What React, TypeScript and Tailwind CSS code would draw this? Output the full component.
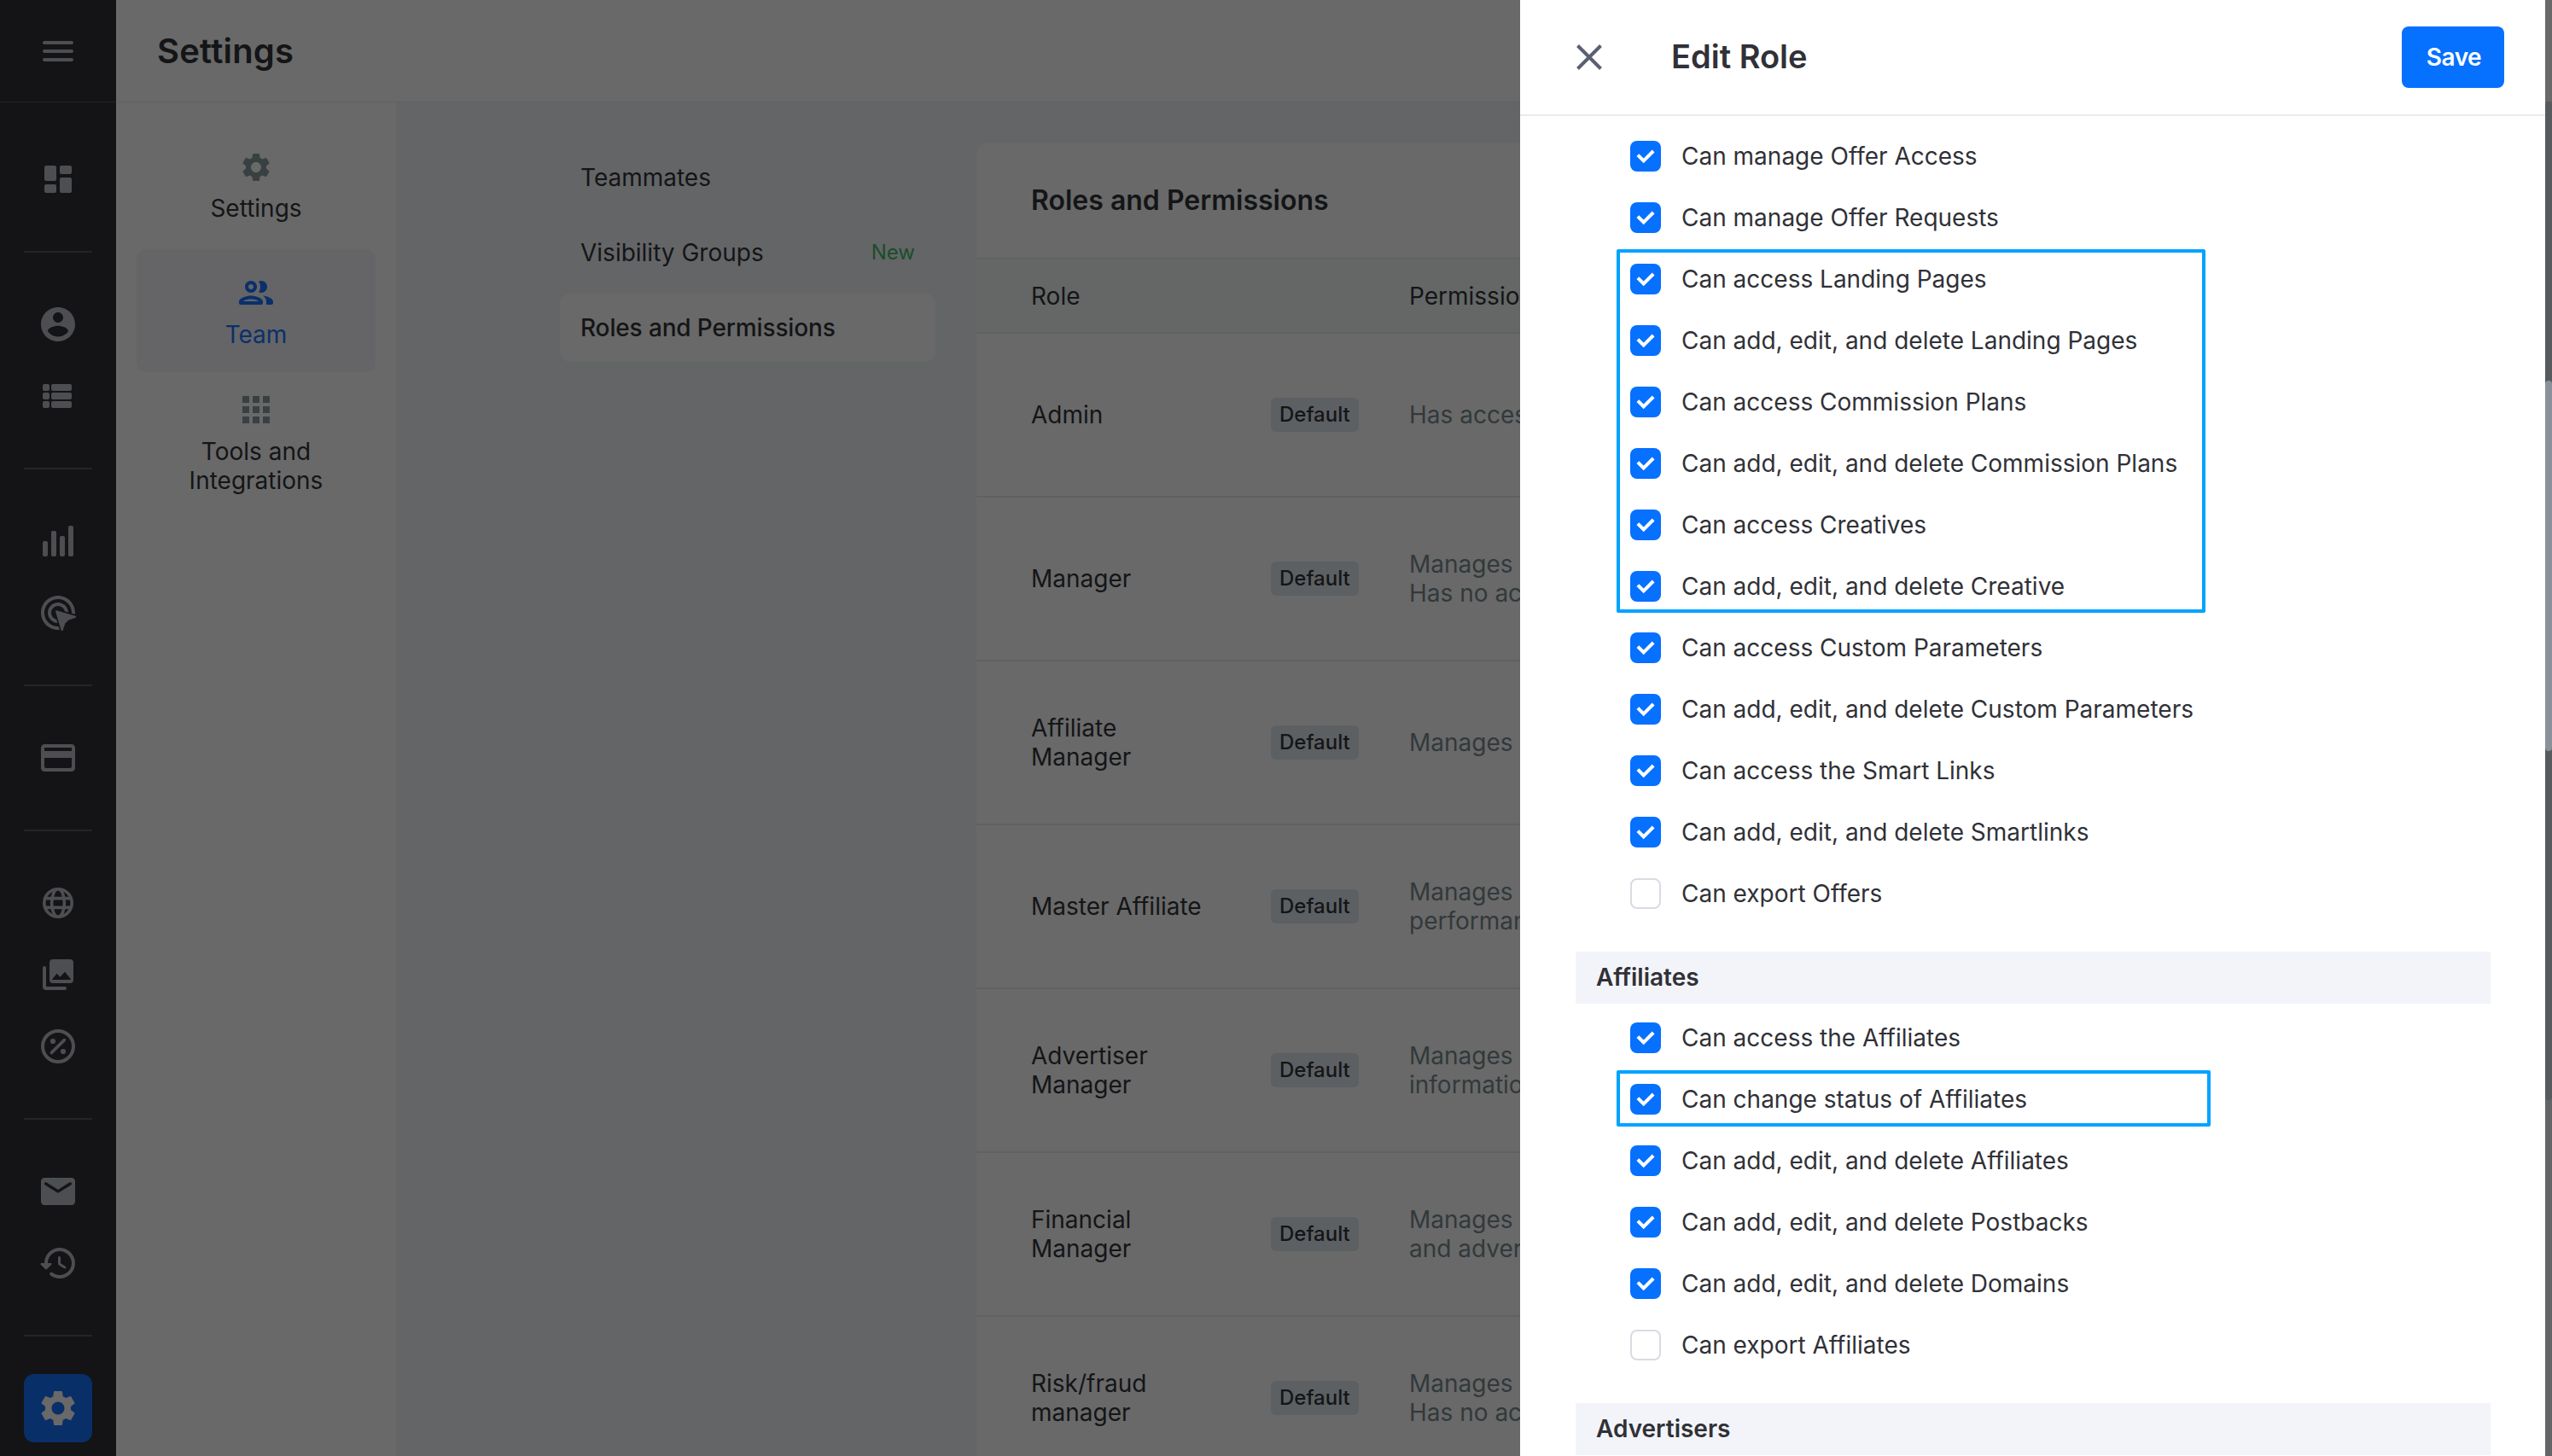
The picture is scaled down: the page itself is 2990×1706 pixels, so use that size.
import clsx from 'clsx';
import { type ReactNode } from 'react';
import { MdSettings } from 'react-icons/md';

const navGroups: { name: string; icon: ReactNode }[][] = [
  [
    {
      name: 'Dashboard',
      icon: (
        <>
          <rect x="4" y="4" width="7" height="9" rx="1" />
          <rect x="4" y="15" width="7" height="5" rx="1" />
          <rect x="13" y="4" width="7" height="5" rx="1" />
          <rect x="13" y="11" width="7" height="9" rx="1" />
        </>
      ),
    },
  ],
  [
    {
      name: 'Account',
      icon: (
        <path d="M12 2C6.48 2 2 6.48 2 12s4.48 10 10 10 10-4.48 10-10S17.52 2 12 2zm0 3c1.66 0 3 1.34 3 3s-1.34 3-3 3-3-1.34-3-3 1.34-3 3-3zm0 14.2c-2.5 0-4.71-1.28-6-3.22.03-1.99 4-3.08 6-3.08 1.99 0 5.97 1.09 6 3.08-1.29 1.94-3.5 3.22-6 3.22z" />
      ),
    },
    {
      name: 'List',
      icon: (
        <>
          <rect x="3" y="5" width="4" height="4" rx="1" />
          <rect x="8" y="5" width="12" height="4" rx="1" />
          <rect x="3" y="10" width="4" height="4" rx="1" />
          <rect x="8" y="10" width="12" height="4" rx="1" />
          <rect x="3" y="15" width="4" height="4" rx="1" />
          <rect x="8" y="15" width="12" height="4" rx="1" />
        </>
      ),
    },
  ],
  [
    {
      name: 'Reports',
      icon: (
        <>
          <rect x="3" y="12" width="3" height="9" rx="1" />
          <rect x="8" y="6" width="3" height="15" rx="1" />
          <rect x="13" y="9" width="3" height="12" rx="1" />
          <rect x="18" y="3" width="3" height="18" rx="1" />
        </>
      ),
    },
    {
      name: 'Clicks',
      icon: (
        <path d="M11.71 17.99A5.993 5.993 0 0 1 6 12c0-3.31 2.69-6 6-6 3.22 0 5.84 2.53 5.99 5.71l-2.1-.63a3.999 3.999 0 1 0-4.81 4.81l.63 2.1zM22 12c0 .3-.01.6-.04.9l-1.97-.59c.01-.1.01-.21.01-.31 0-4.42-3.58-8-8-8s-8 3.58-8 8 3.58 8 8 8c.1 0 .21 0 .31-.01l.59 1.97c-.3.03-.6.04-.9.04-5.52 0-10-4.48-10-10S6.48 2 12 2s10 4.48 10 10zm-3.77 4.26 3.98-1.33c.5-.17.49-.88-.01-1.03l-11.01-3.3c-.41-.12-.8.26-.67.67l3.3 11.01c.15.51.86.52 1.03.01l1.33-3.98" />
      ),
    },
  ],
  [
    {
      name: 'Billing',
      icon: (
        <path d="M20 4H4c-1.11 0-1.99.89-1.99 2L2 18c0 1.11.89 2 2 2h16c1.11 0 2-.89 2-2V6c0-1.11-.89-2-2-2zm-1 14H5c-.55 0-1-.45-1-1v-5h16v5c0 .55-.45 1-1 1zm1-10H4V6h16v2z" />
      ),
    },
  ],
  [
    {
      name: 'Domains',
      icon: (
        <g fill="none" stroke="currentColor" strokeWidth="1.8">
          <circle cx="12" cy="12" r="8.1" />
          <ellipse cx="12" cy="12" rx="3.7" ry="8.1" />
          <path d="M4.4 9.3h15.2M4.4 14.7h15.2" />
        </g>
      ),
    },
    {
      name: 'Creatives',
      icon: (
        <>
          <path
            fillRule="evenodd"
            d="M9 3h10a2 2 0 0 1 2 2v10a2 2 0 0 1-2 2H9a2 2 0 0 1-2-2V5a2 2 0 0 1 2-2zm-.3 12h10.6l.1-.5L16 10.4l-2.8 3-1.9-2-2.7 3.2z"
          />
          <path
            d="M4 8v11a1 1 0 0 0 1 1h11"
            fill="none"
            stroke="currentColor"
            strokeWidth="2"
            strokeLinecap="round"
          />
        </>
      ),
    },
    {
      name: 'Coupons',
      icon: (
        <>
          <circle cx="12" cy="12" r="9" fill="none" stroke="currentColor" strokeWidth="2" />
          <path d="M8.2 15.7l7.5-7.4" stroke="currentColor" strokeWidth="1.8" strokeLinecap="round" />
          <circle cx="9" cy="9" r="1.55" />
          <circle cx="15" cy="15" r="1.55" />
        </>
      ),
    },
  ],
  [
    {
      name: 'Mail',
      icon: (
        <path d="M20 4H4c-1.1 0-2 .9-2 2v12c0 1.1.9 2 2 2h16c1.1 0 2-.9 2-2V6c0-1.1-.9-2-2-2zm-.4 4.25-7.07 4.42c-.32.2-.74.2-1.06 0L4.4 8.25a.85.85 0 1 1 .9-1.44L12 11l6.7-4.19a.85.85 0 1 1 .9 1.44z" />
      ),
    },
    {
      name: 'History',
      icon: (
        <path d="M13.26 3C8.17 2.86 4 6.95 4 12H2.21c-.45 0-.67.54-.35.85l2.79 2.8c.2.2.51.2.71 0l2.79-2.8a.5.5 0 0 0-.36-.85H6c0-3.9 3.18-7.05 7.1-7 3.72.05 6.85 3.18 6.9 6.9.05 3.91-3.1 7.1-7 7.1-1.61 0-3.1-.55-4.28-1.48a.994.994 0 0 0-1.32.08c-.42.42-.39 1.13.08 1.49A8.858 8.858 0 0 0 13 21c5.05 0 9.14-4.17 9-9.26-.13-4.69-4.05-8.61-8.74-8.74zm-.51 5c-.41 0-.75.34-.75.75v3.68c0 .35.19.68.49.86l3.12 1.85c.36.21.82.09 1.03-.26.21-.36.09-.82-.26-1.03l-2.88-1.71v-3.4c0-.4-.34-.74-.75-.74z" />
      ),
    },
  ],
];

const roles: { name: string; description: string[] }[] = [
  { name: 'Admin', description: ['Has access to everything'] },
  { name: 'Manager', description: ['Manages everything', 'Has no access to billing'] },
  { name: 'Affiliate Manager', description: ['Manages affiliates'] },
  { name: 'Master Affiliate', description: ['Manages affiliates', 'performance'] },
  { name: 'Advertiser Manager', description: ['Manages advertisers', 'information'] },
  { name: 'Financial Manager', description: ['Manages affiliates', 'and advertisers'] },
  { name: 'Risk/fraud manager', description: ['Manages reports', 'Has no access'] },
];

const Icon = ({ children, className }: { children: ReactNode; className?: string }) => (
  <svg viewBox="0 0 24 24" fill="currentColor" className={clsx('size-12 shrink-0', className)}>
    {children}
  </svg>
);

const Sidebar = () => (
  <aside className="flex w-[136px] shrink-0 flex-col items-center bg-[#141416] text-[#4d4e52]">
    <div className="flex h-[120px] w-full shrink-0 items-center justify-center border-b border-[#242527]">
      <Icon>
        <path d="M4 18h16c.55 0 1-.45 1-1s-.45-1-1-1H4c-.55 0-1 .45-1 1s.45 1 1 1zm0-5h16c.55 0 1-.45 1-1s-.45-1-1-1H4c-.55 0-1 .45-1 1s.45 1 1 1zM3 7c0 .55.45 1 1 1h16c.55 0 1-.45 1-1s-.45-1-1-1H4c-.55 0-1 .45-1 1z" />
      </Icon>
    </div>
    <nav className="mt-[50px] flex flex-col">
      {navGroups.map((group) => (
        <div key={group[0].name} className="flex flex-col">
          <div className="flex flex-col gap-1">
            {group.map((item) => (
              <button key={item.name} aria-label={item.name} className="flex size-20 items-center justify-center">
                <Icon>{item.icon}</Icon>
              </button>
            ))}
          </div>
          <div className="my-11 h-0.5 w-20 bg-[#242527]" />
        </div>
      ))}
      <button
        aria-label="Settings"
        className="flex size-20 items-center justify-center rounded-xl bg-[#092f69] text-[#696969]"
      >
        <MdSettings className="size-[50px]" />
      </button>
    </nav>
  </aside>
);

const SettingsNav = () => (
  <nav className="flex w-[328px] shrink-0 flex-col items-center bg-[#696969] px-6 pt-6 text-center text-[28px] leading-[34px]">
    <div className="flex h-[148px] w-full flex-col items-center pt-8">
      <MdSettings className="size-10 text-[#394041]" />
      <span className="mt-[11px]">Settings</span>
    </div>
    <div className="flex h-36 w-full flex-col items-center rounded-xl bg-[#656567] pt-[27px] text-[#0a306b]">
      <Icon>
        <path d="M9 13.75c-2.34 0-7 1.17-7 3.5V18c0 .55.45 1 1 1h12c.55 0 1-.45 1-1v-.75c0-2.33-4.66-3.5-7-3.5zM4.34 17c.84-.58 2.87-1.25 4.66-1.25s3.82.67 4.66 1.25H4.34zM9 12c1.93 0 3.5-1.57 3.5-3.5S10.93 5 9 5 5.5 6.57 5.5 8.5 7.07 12 9 12zm0-5c.83 0 1.5.67 1.5 1.5S9.83 10 9 10s-1.5-.67-1.5-1.5S8.17 7 9 7zm7.04 6.81c1.16.84 1.96 1.96 1.96 3.44V19h3c.55 0 1-.45 1-1v-.75c0-2.02-3.5-3.17-5.96-3.44zM15 12c1.93 0 3.5-1.57 3.5-3.5S16.93 5 15 5c-.54 0-1.04.13-1.5.35.63.89 1 1.98 1 3.15s-.37 2.26-1 3.15c.46.22.96.35 1.5.35z" />
      </Icon>
      <span className="mt-2">Team</span>
    </div>
    <div className="flex flex-col items-center pt-5">
      <Icon className="text-[#394041]">
        <path d="M4 4h4v4H4zM10 4h4v4h-4zM16 4h4v4h-4zM4 10h4v4H4zM10 10h4v4h-4zM16 10h4v4h-4zM4 16h4v4H4zM10 16h4v4h-4zM16 16h4v4h-4z" />
      </Icon>
      <span className="mt-2 w-48">Tools and Integrations</span>
    </div>
  </nav>
);

const TeamNav = () => (
  <div className="flex w-[440px] shrink-0 flex-col gap-2 text-[28px]">
    <div className="flex h-20 items-center px-6">Teammates</div>
    <div className="flex h-20 items-center justify-between px-6">
      Visibility Groups
      <span className="text-2xl text-[#1a4d2b]">New</span>
    </div>
    <div className="flex h-20 items-center rounded-xl bg-[#696969] px-6 font-medium tracking-[-0.14px]">
      Roles and Permissions
    </div>
  </div>
);

const RolesTable = () => (
  <div className="flex w-[1760px] shrink-0 flex-col rounded-tl-xl bg-[#696969] text-[28px] leading-[34px]">
    <div className="flex h-[136px] shrink-0 items-center border-b-2 border-[#616266] px-16 text-[32px] font-semibold">
      Roles and Permissions
    </div>
    <div className="flex h-[87px] shrink-0 items-center border-b-2 border-[#606161] bg-[#646766] pl-16">
      <span className="w-[443px]">Role</span>
      <span>Permissions</span>
    </div>
    {roles.map((role) => (
      <div key={role.name} className="flex h-48 shrink-0 items-center border-b-2 border-[#606161] pl-16">
        <div className="w-[281px]">
          <div className="max-w-[210px]">{role.name}</div>
        </div>
        <div className="flex w-[162px]">
          <span className="flex h-10 items-center rounded-md bg-[#5c6063] px-2.5 text-2xl font-medium">Default</span>
        </div>
        <div className="text-[#32393b]">
          {role.description.map((line) => (
            <div key={line}>{line}</div>
          ))}
        </div>
      </div>
    ))}
  </div>
);

const Permission = ({ label, checked = true }: { label: string; checked?: boolean }) => (
  <label className="flex h-[72px] items-center gap-6 pl-16">
    <span
      className={clsx(
        'flex size-9 items-center justify-center rounded-lg',
        checked ? 'bg-[#0670ff]' : 'border-2 border-[#d8dce2] bg-white',
      )}
    >
      {checked && (
        <svg viewBox="0 0 22 17" className="h-[17px] w-[22px]" fill="none" stroke="white" strokeWidth="4">
          <path d="M1.9 6.6l6.8 6.8L20.1 2" />
        </svg>
      )}
    </span>
    {label}
  </label>
);

const SectionTitle = ({ children }: { children: ReactNode }) => (
  <h3 className="mt-8 mb-1 flex h-[61px] shrink-0 items-center bg-[#f3f4f9] px-6 pb-0.5 font-semibold">{children}</h3>
);

const EditRoleDrawer = () => (
  <section className="absolute top-0 right-2 flex h-full w-[1201px] flex-col overflow-hidden bg-white text-[28px] text-[#303137]">
    <header className="flex h-[136px] shrink-0 items-center border-b-2 border-[#e8ebef] pr-12 pl-[66px]">
      <svg viewBox="0 0 30 30" className="size-[30px]" stroke="#5a6072" strokeWidth="4">
        <path d="M1.5 1.5l27 27M28.5 1.5l-27 27" />
      </svg>
      <h2 className="ml-[81px] flex-1 pb-0.5 text-[38px] font-semibold">Edit Role</h2>
      <button className="h-[72px] w-[120px] rounded-lg bg-[#0670ff] pl-0.5 font-semibold tracking-[-0.5px] text-white">
        Save
      </button>
    </header>
    <div className="flex flex-col pt-[11px] pr-16 pl-[65px]">
      <Permission label="Can manage Offer Access" />
      <Permission label="Can manage Offer Requests" />
      <div className="relative">
        <div className="absolute top-[1px] left-12 h-[426px] w-[690px] rounded-xs border-4 border-[#00a3ff]" />
        <Permission label="Can access Landing Pages" />
        <Permission label="Can add, edit, and delete Landing Pages" />
        <Permission label="Can access Commission Plans" />
        <Permission label="Can add, edit, and delete Commission Plans" />
        <Permission label="Can access Creatives" />
        <Permission label="Can add, edit, and delete Creative" />
      </div>
      <Permission label="Can access Custom Parameters" />
      <Permission label="Can add, edit, and delete Custom Parameters" />
      <Permission label="Can access the Smart Links" />
      <Permission label="Can add, edit, and delete Smartlinks" />
      <Permission label="Can export Offers" checked={false} />
      <SectionTitle>Affiliates</SectionTitle>
      <Permission label="Can access the Affiliates" />
      <div className="relative">
        <div className="absolute top-0.5 left-12 h-[66px] w-[696px] rounded-xs border-4 border-[#00a3ff]" />
        <Permission label="Can change status of Affiliates" />
      </div>
      <Permission label="Can add, edit, and delete Affiliates" />
      <Permission label="Can add, edit, and delete Postbacks" />
      <Permission label="Can add, edit, and delete Domains" />
      <Permission label="Can export Affiliates" checked={false} />
      <SectionTitle>Advertisers</SectionTitle>
    </div>
  </section>
);

const App: React.FC = () => {
  return (
    <div className="relative flex h-[1706px] w-[2990px] overflow-hidden bg-[#646567] font-[Inter,sans-serif] text-[#141517]">
      <Sidebar />
      <main className="flex min-w-0 flex-1 flex-col overflow-hidden">
        <header className="flex h-[120px] shrink-0 items-center border-b border-[#606161] bg-[#696969] px-12">
          <h1 className="text-[40px] font-semibold tracking-[0.2px]">Settings</h1>
        </header>
        <div className="flex min-h-0 flex-1">
          <SettingsNav />
          <div className="flex min-w-0 flex-1 gap-12 overflow-hidden pt-12 pl-48">
            <TeamNav />
            <RolesTable />
          </div>
        </div>
      </main>
      {/* page scrollbar with the drawer's own thumb over it */}
      <div className="absolute top-0 right-0 h-[119px] w-2 bg-[#696969]" />
      <div className="absolute top-[119px] right-0 h-[1170px] w-2 rounded-full bg-[#575b5d]" />
      <div className="absolute top-[446px] right-0 h-[434px] w-2 rounded-full bg-[#89929a]" />
      <EditRoleDrawer />
    </div>
  );
};

export default App;
